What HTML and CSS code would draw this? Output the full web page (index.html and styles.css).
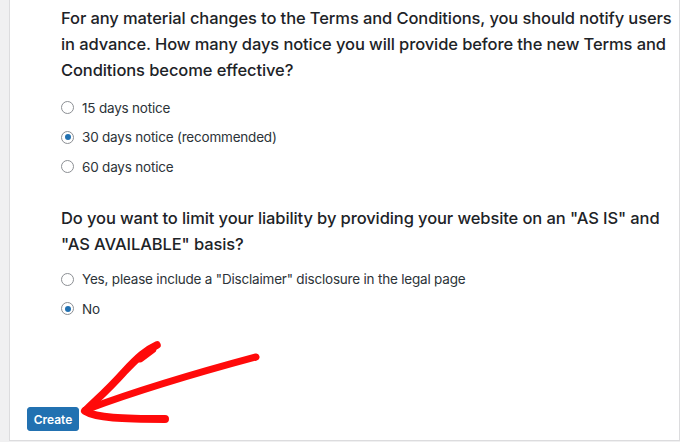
FILE: index.html
```html
<!DOCTYPE html>
<html>
<head>
<meta charset="utf-8">
<link rel="stylesheet" href="styles.css">
</head>
<body>
<div class="card">
  <div class="questions">
    <div class="question">
      <p class="q-title">For any material changes to the Terms and Conditions, you should notify users in advance. How many days notice you will provide before the new Terms and Conditions become effective?</p>
      <ul class="options">
        <li class="option"><span class="radio"></span><span>15 days notice</span></li>
        <li class="option"><span class="radio checked"></span><span>30 days notice (recommended)</span></li>
        <li class="option"><span class="radio"></span><span>60 days notice</span></li>
      </ul>
    </div>
    <div class="question second">
      <p class="q-title">Do you want to limit your liability by providing your website on an "AS IS" and "AS AVAILABLE" basis?</p>
      <ul class="options">
        <li class="option"><span class="radio"></span><span>Yes, please include a "Disclaimer" disclosure in the legal page</span></li>
        <li class="option"><span class="radio checked"></span><span>No</span></li>
      </ul>
    </div>
  </div>
  <div class="actions">
    <button class="btn-primary">Create</button>
  </div>
</div>
<svg class="annotation" width="680" height="442" viewBox="0 0 680 442">
  <g fill="none" stroke="#ff0a0a" stroke-linecap="round" stroke-linejoin="round">
    <path d="M256 357 C 215 368, 150 386, 88 409" stroke-width="7"/>
    <path d="M157 345 C 146 350, 138 357, 124 372 C 108 390, 95 401, 86 410" stroke-width="7.5"/>
    <path d="M152 349 L 140 358" stroke-width="9"/>
    <path d="M85 411 C 96 418, 122 419, 165 419" stroke-width="8"/>
  </g>
</svg>
</body>
</html>
```

FILE: styles.css
```css
* { box-sizing: border-box; }
html, body { margin: 0; padding: 0; }
body {
  background: #f0f0f1;
  width: 680px;
  height: 442px;
  overflow: hidden;
  position: relative;
  font-family: Inter, "Noto Sans", sans-serif;
  color: #1d2327;
}
.card {
  margin: -1px 0 0 9px;
  width: 671px;
  height: 442px;
  background: #fff;
  border: 1px solid #dcdcde;
  padding: 0 6px 9px 17px;
  display: flex;
  flex-direction: column;
}
.questions { padding-left: 34px; }
.q-title {
  margin: 0;
  font-size: 16.5px;
  letter-spacing: -0.1px;
  font-weight: 500;
  line-height: 26px;
  padding-top: 5px;
}
.options {
  list-style: none;
  margin: 10px 0 0;
  padding: 0;
}
.option {
  display: flex;
  align-items: center;
  gap: 8px;
  height: 29.5px;
  font-size: 13.5px;
  letter-spacing: -0.2px;
  color: #2c3338;
}
.radio {
  width: 13px;
  height: 13px;
  border: 1px solid #8c8f94;
  border-radius: 50%;
  background: #fff;
  position: relative;
  flex: none;
}
.radio.checked::after {
  content: "";
  position: absolute;
  left: 2.5px;
  top: 2.5px;
  width: 6px;
  height: 6px;
  border-radius: 50%;
  background: #2271b1;
}
.second { margin-top: 18px; }
.second .options { margin-top: 8px; }
.actions { margin-top: auto; }
.btn-primary {
  display: block;
  width: 52px;
  height: 24px;
  padding: 0;
  background: #2271b1;
  border: 1px solid #2271b1;
  border-radius: 3px;
  color: #fff;
  font-family: Inter, "Noto Sans", sans-serif;
  font-size: 12px;
  font-weight: 600;
}
.annotation {
  position: absolute;
  left: 0;
  top: 0;
  pointer-events: none;
}
```
